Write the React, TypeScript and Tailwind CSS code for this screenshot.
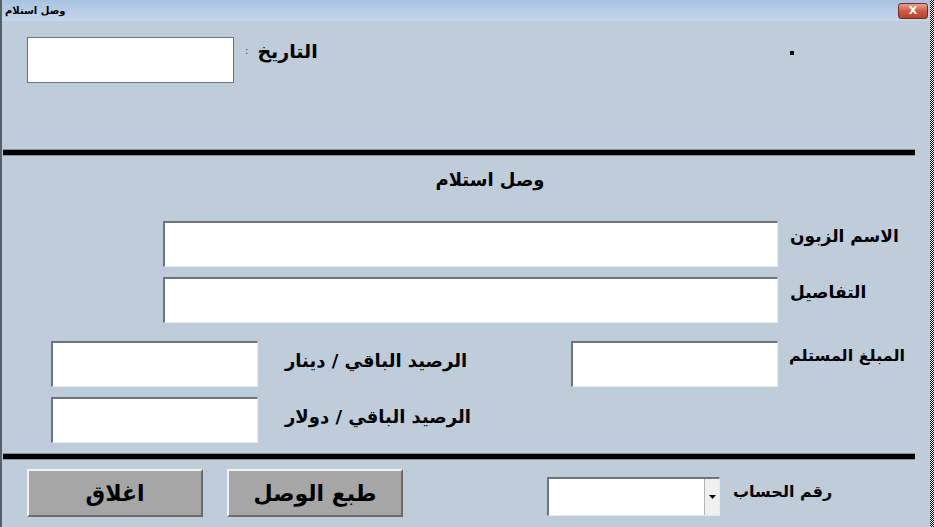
import React from 'react';

const field =
  'bg-white border-t-2 border-l-2 border-r border-b border-t-[#6f747a] border-l-[#6f747a] border-r-[#e6ebf0] border-b-[#e6ebf0]';
const label = 'font-bold text-black leading-[22px] whitespace-nowrap';
const button =
  'w-[176px] h-[48px] bg-[#a6a6a6] border-t-2 border-l-2 border-r-2 border-b-2 border-t-[#f4f4f4] border-l-[#f4f4f4] border-r-[#6b6b6b] border-b-[#6b6b6b] flex items-center justify-center text-[22px] font-bold text-black';

const Rule = () => (
  <div className="ml-[1px] w-[912px] h-[7px] bg-black border-y border-[#8a8f96]" />
);

const App: React.FC = () => {
  return (
    <div className="w-[934px] h-[527px] flex bg-[#bfcddb] overflow-hidden font-['DejaVu_Sans',sans-serif]">
      {/* left frame edge */}
      <div className="w-[2px] h-full bg-[#56606b]" />

      <div className="w-[928px] h-full flex flex-col">
        {/* title bar */}
        <div className="h-[21px] flex items-center justify-between bg-linear-to-b from-[#a8c3e2] to-[#c6d7eb] pl-[3px] pr-[2px]">
          <span dir="rtl" className="text-[10px] font-bold leading-none text-black">وصل استلام</span>
          <div className="w-[30px] h-[16px] rounded-[3px] border border-[#7a2a20] bg-linear-to-b from-[#e5a28f] via-[#cf5a43] to-[#b8412c] flex items-center justify-center">
            <span className="text-[11px] font-bold leading-none text-white">X</span>
          </div>
        </div>

        {/* header: date */}
        <div className="h-[128px] flex items-start pt-[16px] pl-[25px]">
          <div className="w-[207px] h-[46px] bg-white border border-[#6f747a]" />
          <span className="ml-[11px] mt-[9px] text-[10px] leading-none text-[#444]">:</span>
          <span dir="rtl" className={`ml-[9px] mt-[3px] text-[19px] ${label}`}>التاريخ</span>
          <div className="ml-[472px] mt-[14px] w-[4px] h-[4px] bg-black" />
        </div>

        <Rule />

        {/* heading */}
        <div className="h-[65px] flex justify-center pt-[13px] pl-[48px]">
          <span dir="rtl" className={`text-[18px] ${label}`}>وصل استلام</span>
        </div>

        {/* customer name */}
        <div className="flex items-start pl-[161px]">
          <div className={`w-[615px] h-[46px] ${field}`} />
          <span dir="rtl" className={`ml-[12px] mt-[4px] text-[17px] ${label}`}>الاسم الزبون</span>
        </div>

        {/* details */}
        <div className="flex items-start pl-[161px] mt-[10px]">
          <div className={`w-[615px] h-[46px] ${field}`} />
          <span dir="rtl" className={`ml-[12px] mt-[4px] text-[17px] ${label}`}>التفاصيل</span>
        </div>

        {/* amounts */}
        <div className="flex items-start pl-[49px] mt-[18px]">
          <div className={`w-[207px] h-[46px] ${field}`} />
          <div className="w-[313px] pl-[27px] pt-[9px]">
            <span dir="rtl" className={`text-[18px] ${label}`}>الرصيد الباقي / دينار</span>
          </div>
          <div className={`w-[207px] h-[46px] ${field}`} />
          <span dir="rtl" className={`ml-[11px] mt-[4px] text-[16px] ${label}`}>المبلغ المستلم</span>
        </div>

        <div className="flex items-start pl-[49px] mt-[10px]">
          <div className={`w-[207px] h-[46px] ${field}`} />
          <div className="pl-[27px] pt-[9px]">
            <span dir="rtl" className={`text-[18px] ${label}`}>الرصيد الباقي / دولار</span>
          </div>
        </div>

        <div className="mt-[10px]">
          <Rule />
        </div>

        {/* footer */}
        <div className="flex items-start pl-[25px] mt-[9px]">
          <div dir="rtl" className={button}>اغلاق</div>
          <div dir="rtl" className={`ml-[24px] ${button}`}>طبع الوصل</div>
          <div className="ml-[144px] mt-[8px] w-[173px] h-[39px] bg-white border-t-2 border-l-2 border-r border-b border-t-[#6f747a] border-l-[#6f747a] border-r-[#e6ebf0] border-b-[#e6ebf0] flex justify-end">
            <div className="w-[15px] h-full bg-[#f0f0f0] border-l border-[#b5b5b5] flex items-center justify-center">
              <svg width="7" height="4" viewBox="0 0 7 4">
                <path d="M0 0h7L3.5 4z" fill="#000" />
              </svg>
            </div>
          </div>
          <span dir="rtl" className={`ml-[13px] mt-[12px] text-[16px] ${label}`}>رقم الحساب</span>
        </div>
      </div>

      {/* right dotted frame edge */}
      <div className="w-[4px] h-full bg-[conic-gradient(#000_25%,#fff_0_50%,#000_0_75%,#fff_0)] bg-[length:2px_2px]" />
    </div>
  );
};

export default App;
